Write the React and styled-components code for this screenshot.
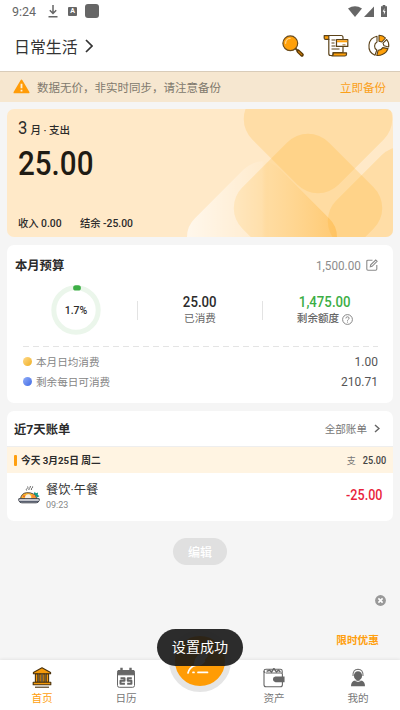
import React from "react";
import styled, { createGlobalStyle } from 'styled-components'

const GlobalStyle = createGlobalStyle`
  * { box-sizing: border-box; }
  body {
    margin: 0;
    background: #f5f5f5;
    font-family: Roboto, "Noto Sans CJK SC", sans-serif;
    color: #2b2b2b;
  }
  svg { display: block; flex: none; }
`

/* icons */
const SearchIcon = () => (
  <svg width="24" height="24" viewBox="0 0 24 24">
    <path d="M14.5 14.5l3 3" stroke="#5b4219" strokeWidth="1.8" />
    <path d="M17.2 17.2l3.8 3.7" stroke="#5b3a06" strokeWidth="3.6" strokeLinecap="round" />
    <path d="M17.7 17.7l3 2.9" stroke="#c97a0a" strokeWidth="1.3" strokeLinecap="round" />
    <circle cx="9.3" cy="9.3" r="7.4" fill="#ffa00a" stroke="#6a4b1c" strokeWidth="1.2" />
    <path d="M4.6 9.3a4.8 4.8 0 0 1 4.5-4.9" fill="none" stroke="#ffd38a" strokeWidth="1.3" strokeLinecap="round" />
  </svg>
)

const BillIcon = () => (
  <svg width="26" height="24" viewBox="0 0 26 24" fill="none" stroke="#5b4219" strokeWidth="1.2" strokeLinejoin="round">
    <path d="M5 1.5h13.2q1.8 0 1.8 2v15H10v3H7.5q-1.7 0-1.7-2V5" fill="#fff" />
    <path d="M1.2 1.6h4.6v3.8H2.5Q1.2 5.4 1.2 4z" fill="#ffa00a" />
    <path d="M10.5 18.8h13v1.4q0 1.8-1.8 1.8H9q1.5-1 1.5-3.2z" fill="#ffa00a" />
    <path d="M8.5 6h4M8.5 9h3M8.5 12h4M8.5 15h8" />
    <path d="M13.5 5.6h11.3v6.8H13.5z" fill="#fff" />
    <path d="M14 7.3h10.3" stroke="#ffa00a" strokeWidth="2" />
    <path d="M19.5 10.8h3" stroke="#b78a45" />
  </svg>
)

const RingIcon = () => (
  <svg width="24" height="24" viewBox="0 0 24 24" fill="#fff" stroke="#5b4219" strokeWidth="1.1" strokeLinejoin="round">
    <path d="M10 2.2A10 10 0 0 0 8 21.2L9.8 16A4.6 4.6 0 0 1 10 8z" />
    <path d="M12 1.2q4-.1 6.500 2.800L14.800 8 12 7.300z" fill="#ffa00a" />
    <path d="M19.700 5.500q2.600 3 2 7.500l-4.700-1.200-1-2.700z" />
    <path d="M21 14.600q-1.500 4.200-5.200 5.700-3 1.500-6 1.200l1.300-5.200q3 .2 4.700-2.700z" fill="#ffa00a" />
  </svg>
)

const WarnIcon = () => (
  <svg width="17" height="16" viewBox="0 0 17 16">
    <path d="M8.5 1.4L15.600 13.400H1.400z" fill="#ff9c08" stroke="#ff9c08" strokeWidth="1.8" strokeLinejoin="round" />
    <path d="M8.5 4.800v4.400M8.500 10.800v1.700" stroke="#fff0d8" strokeWidth="1.800" />
  </svg>
)

const Chevron = ({ w, h, color, stroke }) => (
  <svg width={w} height={h} viewBox={`0 0 ${w} ${h}`} fill="none" stroke={color} strokeWidth={stroke}>
    <path d={`M1 1L${w - 1} ${h / 2}L1 ${h - 1}`} />
  </svg>
)

const EditIcon = () => (
  <svg width="12" height="12" viewBox="0 0 12 12" fill="none" stroke="#8a8a8a" strokeWidth="1.1">
    <path d="M6.5 1.2H2Q.8 1.2.8 2.4V10q0 1.2 1.2 1.2h7.6q1.2 0 1.2-1.2V6" />
    <path d="M4.3 7.8l.4-1.9L9.7 1l1.4 1.3-5 5z" />
  </svg>
)

const HelpIcon = () => (
  <svg width="11" height="11" viewBox="0 0 11 11" fill="none" stroke="#7a7a7a" strokeWidth=".9">
    <circle cx="5.5" cy="5.5" r="4.9" />
    <path d="M3.9 4.4q0-1.6 1.6-1.6t1.6 1.4q0 .8-.9 1.3-.7.4-.7 1.2M5.5 7.6v1" />
  </svg>
)

const FoodIcon = () => (
  <svg width="22" height="20" viewBox="0 0 22 20">
    <path d="M8.6 5.5q-.8-1.2.5-2t.5-2M11 5q-.6-1.2.6-2t.7-2M13.5 5q-.6-1.2.5-2t.6-1.6" fill="none" stroke="#555" strokeWidth=".9" />
    <path d="M15.5 9.5l1.2-2.8 1.2 1.6 2.2-.8-.4 2.6 1.8 1-2 1.4z" fill="#159b86" />
    <path d="M2.5 13.8Q3.4 8.2 8.5 7.7 16.5 7 19 13.8z" fill="#ffb52c" stroke="#443b35" strokeWidth=".9" />
    <path d="M7.2 11.5q1.2-3 4-2.2 3 1.6 1.6 4.4H7z" fill="#f8efe1" />
    <circle cx="15.6" cy="11.3" r="1.7" fill="#ff8a36" />
    <circle cx="6" cy="11.3" r="1" fill="#e75f32" />
    <path d="M.8 13.7h20.4v1.8q-.7 2.3-3 2.3H3.8q-2.3 0-3-2.3z" fill="#e6e6ea" stroke="#3c414b" strokeWidth="1" />
    <path d="M2 16.5h18" stroke="#596070" strokeWidth="1.400" />
  </svg>
)

const HomeIcon = () => (
  <svg width="20" height="21" viewBox="0 0 20 21" fill="#f59a0a" stroke="#4a310b" strokeWidth="1.1" strokeLinejoin="round">
    <path d="M1.4 5.5L10 .8l8.600 4.700v1.300H1.400z" />
    <path d="M3.4 7h2.400v8.200H3.400zM7.100 7h2.100v8.200H7.100zM10.800 7h2.100v8.200h-2.100zM14.200 7h2.400v8.200h-2.400z" />
    <path d="M1.2 15.300h17.600v2.500H1.200z" />
    <path d="M3 20.200h14" />
  </svg>
)

const CalendarIcon = () => (
  <svg width="20" height="21" viewBox="0 0 20 21" fill="none" stroke="#666">
    <rect x="1.5" y="3.5" width="17" height="16.8" rx="1.8" />
    <path d="M2 3.5h16v4.3H2z" fill="#666" />
    <path d="M5.5.8v4M14.5.8v4" stroke="#666" strokeWidth="2.4" />
    <path d="M4.5 11.2h4v2.6h-4v3h4.4M15.8 11.2h-4v2.6h3.6v3h-4.2" strokeWidth="2" strokeLinejoin="round" />
  </svg>
)

const WalletIcon = () => (
  <svg width="22" height="20" viewBox="0 0 22 20" fill="none" stroke="#666" strokeWidth="1.1">
    <path d="M2.3 4.8Q1 4.3 1 3q0-1.7 2-1.7h14.4q1.8 0 1.8 1.8v1.8" />
    <path d="M1 3v13.8q0 2 2 2h14.4q2 0 2-2V6q0-1-1.2-1H2.8" />
    <path d="M3.6 3.4l3-1.2L8.5 4l2.4-3.4L13.4 4l2-1.8 2 1.6" strokeWidth="1.5" />
    <path d="M12.5 9H21v4.6h-8.5q-2-.2-2-2.3t2-2.3z" fill="#666" />
  </svg>
)

const MineIcon = () => (
  <svg width="16" height="20" viewBox="0 0 16 20">
    <path d="M3 8q-.4-6.600 5-6.800 5.400.2 5 6.800" fill="none" stroke="#777" strokeWidth="1.1" />
    <ellipse cx="8" cy="7.8" rx="4.1" ry="4.6" fill="#666" />
    <path d="M1 18.200q0-5 4.200-5.900h5.600q4.200.9 4.200 5.900z" fill="#666" />
    <path d="M4.400 12.200q3.600 3 7.200 0" fill="none" stroke="#fff" strokeWidth=".8" />
  </svg>
)

const FeatherIcon = () => (
  <svg width="28" height="30" viewBox="0 0 28 30">
    <path d="M8 18.500Q7 7 22 0q1.500 5-1 7l1 1-3.500 4 1 1q-3 5-9 5z" fill="#fff" />
    <path d="M2 25q1-5 7-8M7 24.400h1M12 24.400h9.500" fill="none" stroke="#fff" strokeWidth="1.7" strokeLinecap="round" />
  </svg>
)

const CloseIcon = () => (
  <svg width="11" height="11" viewBox="0 0 11 11">
    <circle cx="5.5" cy="5.5" r="5.4" fill="#999" />
    <path d="M3.4 3.4l4.2 4.2M7.6 3.4L3.4 7.6" stroke="#fff" strokeWidth="1.6" />
  </svg>
)

/* rounded diamonds behind the summary card */
const Diamond = ({ cx, cy, fill }) => (
  <rect x={cx - 61} y={cy - 61} width="122" height="122" rx="29" fill={fill} transform={`rotate(45 ${cx} ${cy})`} />
)

const CardArt = () => (
  <svg width="386" height="128" viewBox="0 0 386 128">
    <defs>
      <linearGradient id="fade" gradientUnits="userSpaceOnUse" x1="180" y1="0" x2="330" y2="0">
        <stop offset="0" stopColor="#fff" stopOpacity=".65" />
        <stop offset=".5" stopColor="#fff" stopOpacity=".1" />
        <stop offset=".55" stopColor="#ffb433" stopOpacity=".02" />
        <stop offset="1" stopColor="#ffa81e" stopOpacity=".36" />
      </linearGradient>
    </defs>
    <Diamond cx={311} cy={10} fill="rgba(255,184,60,.24)" />
    <Diamond cx={301} cy={99} fill="rgba(255,184,60,.27)" />
    <Diamond cx={395} cy={112} fill="rgba(255,184,60,.24)" />
    <path d="M180 128q0-11 8-18.700L236.600 60.600q18.400-16.500 36.800 0L322 109.300q8 7.700 8 18.700z" fill="url(#fade)" />
  </svg>
)

/* narrow figures */
const Num = ({ children, ...rest }) => <Figure {...rest}>{children}</Figure>

const BudgetStat = ({ value, label, green, help }) => (
  <Stat>
    <Num $size={14.7} $weight={500} $color={green ? '#3cae45' : '#2b2b2b'} $origin="center">{value}</Num>
    <StatLabel $strong={help}>{label}{help && <HelpIcon />}</StatLabel>
  </Stat>
)

const DailyRow = ({ dot, label, value }) => (
  <Daily>
    <Dot $color={dot} />
    <DailyLabel>{label}</DailyLabel>
    <Num $size={13.3} $color="#555" $origin="right">{value}</Num>
  </Daily>
)

const tabs = [
  { label: '首页', icon: <HomeIcon />, active: true },
  { label: '日历', icon: <CalendarIcon /> },
  null,
  { label: '资产', icon: <WalletIcon /> },
  { label: '我的', icon: <MineIcon /> },
]

const App = () => {
  return (
    <Screen>
      <GlobalStyle />
      <StatusBar>
        <Clock>9:24</Clock>
        <svg width="10" height="13" viewBox="0 0 10 13" fill="none" stroke="#666" strokeWidth="1.5">
          <path d="M5 0v8M1.8 5.3L5 8.5l3.2-3.2M.5 11.8h9" />
        </svg>
        <SmallBadge>A</SmallBadge>
        <SquareBadge />
        <Signals>
          <svg width="14" height="11" viewBox="0 0 14 11"><path d="M0 2.5Q7-2.200 14 2.500L7 11z" fill="#666" /></svg>
          <svg width="10" height="11" viewBox="0 0 10 11"><path d="M10 .5V11H0z" fill="#666" /></svg>
          <svg width="6" height="12" viewBox="0 0 6 12">
            <path d="M1.7 0h2.600v1.200H6V12H0V1.200h1.700z" fill="#666" />
            <path d="M3.5 3L1.700 6.800h1.200V10l1.600-4H3.300z" fill="#fff" />
          </svg>
        </Signals>
      </StatusBar>
      <Header>
        <Title>日常生活</Title>
        <Chevron w={8} h={14} color="#333" stroke={1.7} />
        <Actions>
          <SearchIcon />
          <BillIcon />
          <RingIcon />
        </Actions>
      </Header>
      <Notice>
        <WarnIcon />
        <NoticeText>数据无价，非实时同步，请注意备份</NoticeText>
        <NoticeLink>立即备份</NoticeLink>
      </Notice>

      <Content>
        <Summary>
          <Art><CardArt /></Art>
          <SummaryBody>
            <Month><Num $size={18.5} $origin="left">3</Num>月 · 支出</Month>
            <Num $size={34} $weight={500} $scale={.87} $color="#1f1b14" $origin="left">25.00</Num>
            <Totals>
              <span>收入 <Num $size={11.5} $weight={500} $origin="left">0.00</Num></span>
              <span>结余 <Num $size={11.5} $weight={500} $origin="left">-25.00</Num></span>
            </Totals>
          </SummaryBody>
        </Summary>

        <Budget>
          <BudgetHead>
            <Heading>本月预算</Heading>
            <BudgetTotal><Num $size={13} $color="#8c8c8c" $origin="right">1,500.00</Num><EditIcon /></BudgetTotal>
          </BudgetHead>
          <Stats>
            <Gauge>
              <svg width="50" height="50" viewBox="0 0 50 50">
                <circle cx="25" cy="25" r="22.2" fill="none" stroke="#ebf6eb" strokeWidth="5" />
                <path d="M24.8 2.900h2.400" stroke="#3cae45" strokeWidth="5.400" strokeLinecap="round" />
              </svg>
              <GaugeText>1.7%</GaugeText>
            </Gauge>
            <Divider />
            <BudgetStat value="25.00" label="已消费" />
            <Divider />
            <BudgetStat value="1,475.00" label="剩余额度" green help />
          </Stats>
          <Dashes />
          <DailyRow dot="linear-gradient(135deg,#ffd98a,#efb024)" label="本月日均消费" value="1.00" />
          <DailyRow dot="linear-gradient(135deg,#91aef8,#416be5)" label="剩余每日可消费" value="210.71" />
        </Budget>

        <Bills>
          <BillsHead>
            <Heading>近7天账单</Heading>
            <AllBills>全部账单<Chevron w={6} h={9} color="#666" stroke={1.5} /></AllBills>
          </BillsHead>
          <DayRow>
            <Marker />
            <DayText>今天 3月25日 周二</DayText>
            <DayTotal>支 <Num $size={11} $weight={500} $scale={.83} $color="#444" $origin="right">25.00</Num></DayTotal>
          </DayRow>
          <Entry>
            <FoodIcon />
            <EntryInfo>
              <EntryName>餐饮·午餐</EntryName>
              <EntryTime>09:23</EntryTime>
            </EntryInfo>
            <Num $size={14} $weight={500} $color="#e91f3c" $origin="right">-25.00</Num>
          </Entry>
        </Bills>
        <EditButton>编辑</EditButton>
      </Content>

      <Promo>
        <CloseIcon />
        <PromoText>限时优惠</PromoText>
      </Promo>

      <TabBar>
        {tabs.map((t, i) => t
          ? <Tab key={i} $active={t.active}><TabIcon>{t.icon}</TabIcon>{t.label}</Tab>
          : <AddSlot key={i}><AddButton><FeatherIcon /></AddButton></AddSlot>
        )}
      </TabBar>
      <Toast>设置成功</Toast>
    </Screen>
  )
}

export default App

const Screen = styled.div`
  position: relative;
  display: flex;
  flex-direction: column;
  width: 400px;
  height: 710px;
  overflow: hidden;
  background: #f5f5f5;
`
const Figure = styled.span`
  display: inline-block;
  font-size: ${props => props.$size + 'px'};
  font-weight: ${props => props.$weight || 400};
  line-height: 1;
  color: ${props => props.$color || 'inherit'};
  transform: scaleX(${props => props.$scale || .9});
  transform-origin: ${props => props.$origin || 'center'};
`
const StatusBar = styled.div`
  display: flex;
  align-items: center;
  height: 22px;
  padding: 0 13px 0 12px;
  background: #fff;
`
const Clock = styled.span`
  width: 36px;
  font-size: 12.5px;
  color: #666;
`
const SmallBadge = styled.span`
  width: 9px;
  height: 9px;
  margin-left: 10px;
  background: #666;
  border-radius: 1px;
  color: #fff;
  font-size: 7px;
  font-weight: 700;
  line-height: 9px;
  text-align: center;
`
const SquareBadge = styled.span`
  width: 14px;
  height: 14px;
  margin-left: 8px;
  border-radius: 3px;
  background: #666;
`
const Signals = styled.div`
  display: flex;
  align-items: center;
  gap: 2px;
  margin-left: auto;
  svg:last-child { margin-left: 5px; }
`
const Header = styled.header`
  display: flex;
  align-items: center;
  height: 49px;
  padding: 0 9px 1px 14px;
  background: #fff;
`
const Title = styled.span`
  margin-right: 7px;
  font-size: 15.9px;
  color: #333;
`
const Actions = styled.div`
  display: flex;
  gap: 18px;
  margin-left: auto;
`
const Notice = styled.div`
  display: flex;
  align-items: center;
  height: 31px;
  padding: 0 14px 0 13px;
  border-top: 1px solid #d9ccb9;
  background: #f6e7d0;
  font-size: 11.5px;
`
const NoticeText = styled.span`
  margin-left: 7px;
  color: #80796d;
`
const NoticeLink = styled.span`
  margin-left: auto;
  color: #fba019;
`
const Content = styled.main`
  display: flex;
  flex-direction: column;
  gap: 8px;
  padding: 7px 7px 0;
`
const Summary = styled.section`
  position: relative;
  height: 128px;
  border-radius: 7px;
  overflow: hidden;
  background: #ffe9c8;
`
const Art = styled.div`
  position: absolute;
  inset: 0;
`
const SummaryBody = styled.div`
  position: relative;
  display: flex;
  flex-direction: column;
  align-items: flex-start;
  height: 100%;
  padding: 10px 11px 5px;
`
const Month = styled.div`
  display: flex;
  align-items: baseline;
  gap: 2px;
  height: 27px;
  font-size: 10.5px;
  font-weight: 500;
  line-height: 20px;
`
const Totals = styled.div`
  display: flex;
  gap: 16px;
  margin-top: auto;
  font-size: 10.3px;
  font-weight: 500;
  line-height: 16px;
`
const Budget = styled.section`
  height: 158px;
  padding: 0 15px 0 8px;
  border-radius: 7px;
  background: #fff;
`
const BudgetHead = styled.div`
  display: flex;
  align-items: center;
  justify-content: space-between;
  height: 40px;
`
const Heading = styled.span`
  font-size: 12.3px;
  font-weight: 700;
`
const BudgetTotal = styled.span`
  display: flex;
  align-items: center;
  gap: 5px;
`
const Stats = styled.div`
  display: flex;
  align-items: center;
  height: 50px;
`
const Gauge = styled.div`
  position: relative;
  display: flex;
  flex: none;
  justify-content: center;
  width: 122px;
`
const GaugeText = styled.span`
  position: absolute;
  top: 0;
  font-size: 10.5px;
  font-weight: 500;
  line-height: 51px;
`
const Divider = styled.i`
  flex: none;
  width: 1px;
  height: 19px;
  background: #e3e3e3;
`
const Stat = styled.div`
  display: flex;
  flex: none;
  flex-direction: column;
  align-items: center;
  gap: 2px;
  width: 124px;
  padding-top: 2px;
`
const StatLabel = styled.span`
  display: flex;
  align-items: center;
  gap: 3px;
  font-size: 10.6px;
  font-weight: ${props => props.$strong ? 500 : 400};
  line-height: 16px;
  color: #666;
`
const Dashes = styled.div`
  height: 1px;
  margin: 11px 0 5px 8px;
  background: repeating-linear-gradient(90deg, #e4e4e4 0 6px, transparent 6px 10px);
`
const Daily = styled.div`
  display: flex;
  align-items: center;
  height: 19.5px;
  padding-left: 8px;
`
const Dot = styled.i`
  width: 9px;
  height: 9px;
  border-radius: 50%;
  background: ${props => props.$color};
`
const DailyLabel = styled.span`
  flex: 1;
  margin-left: 4px;
  font-size: 10.6px;
  color: #858585;
`
const Bills = styled.section`
  height: 110px;
  border-radius: 7px;
  overflow: hidden;
  background: #fff;
`
const BillsHead = styled.div`
  display: flex;
  align-items: center;
  justify-content: space-between;
  height: 36px;
  padding: 0 13px 0 7px;
  border-bottom: 1px solid #eee;
`
const AllBills = styled.span`
  display: flex;
  align-items: center;
  gap: 7px;
  font-size: 10.6px;
  color: #777;
`
const DayRow = styled.div`
  display: flex;
  align-items: center;
  height: 26px;
  padding: 0 7px;
  background: #fff4e2;
`
const Marker = styled.i`
  width: 3px;
  height: 11px;
  border-radius: 1px;
  background: #ff9f0e;
`
const DayText = styled.span`
  margin-left: 4px;
  font-size: 9.7px;
  font-weight: 700;
`
const DayTotal = styled.span`
  margin-left: auto;
  font-size: 9px;
  color: #777;
`
const Entry = styled.div`
  display: flex;
  align-items: center;
  height: 48px;
  padding: 0 11px 4px;
`
const EntryInfo = styled.div`
  display: flex;
  flex: 1;
  flex-direction: column;
  margin-left: 6px;
  padding-top: 2px;
`
const EntryName = styled.span`
  font-size: 12.3px;
  line-height: 17px;
  color: #333;
`
const EntryTime = styled.span`
  font-size: 9px;
  line-height: 12px;
  color: #888;
`
const EditButton = styled.button`
  align-self: center;
  width: 54px;
  height: 27px;
  margin-top: 9px;
  padding: 0;
  border: 0;
  border-radius: 14px;
  background: #e0e0e0;
  color: #fff;
  font-family: inherit;
  font-size: 12px;
  font-weight: 500;
`
const Promo = styled.aside`
  display: flex;
  flex-direction: column;
  align-items: flex-end;
  gap: 27px;
  margin-top: auto;
  padding: 0 14px 11px;
`
const PromoText = styled.span`
  margin-right: 7px;
  font-size: 10.7px;
  font-weight: 700;
  line-height: 16px;
  color: #ff9f0e;
`
const TabBar = styled.nav`
  display: flex;
  height: 50px;
  background: #fff;
  box-shadow: 0 -1px 3px rgba(0, 0, 0, .07);
`
const Tab = styled.div`
  display: flex;
  flex-direction: column;
  align-items: center;
  width: 84px;
  padding-top: 5px;
  font-size: 10.6px;
  line-height: 17px;
  color: ${props => props.$active ? '#ff9f0e' : '#777'};
`
const TabIcon = styled.div`
  display: flex;
  align-items: center;
  height: 25px;
`
const AddSlot = styled.div`
  position: relative;
  width: 64px;
`
const AddButton = styled.div`
  position: absolute;
  top: -30px;
  left: 1px;
  display: flex;
  justify-content: center;
  padding-top: 12px;
  width: 62px;
  height: 62px;
  border: 6px solid #e5e5e5;
  border-radius: 50%;
  background: #ff9c05;
`
const Toast = styled.div`
  position: absolute;
  top: 629px;
  left: 157px;
  width: 86px;
  height: 37px;
  border-radius: 19px;
  background: rgba(24, 24, 24, .91);
  color: #fff;
  font-size: 14.1px;
  line-height: 37px;
  text-align: center;
`
